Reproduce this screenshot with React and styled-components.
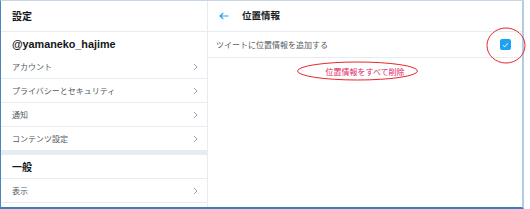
import React from "react";
import styled, { createGlobalStyle } from "styled-components";

const Global = createGlobalStyle`
  html, body { margin: 0; padding: 0; background: #ffffff; }
  body { font-family: "Noto Sans CJK JP", "Liberation Sans", sans-serif; }
`;

const Frame = styled.div`
  position: relative;
  width: 524px;
  height: 209px;
  box-sizing: border-box;
  border-left: 1px solid #4f82c0;
  border-top: 1px solid #c9d6e6;
  border-right: 2px solid #b4cbe8;
  border-bottom: 2px solid #3f7bbf;
  display: flex;
  overflow: visible;
  background: #fff;
`;

const LeftPanel = styled.div`
  width: 206px;
  border-right: 1px solid #e6ecf0;
  display: flex;
  flex-direction: column;
`;

const RightPanel = styled.div`
  flex: 1;
  display: flex;
  flex-direction: column;
`;

const Header = styled.div`
  height: 30px;
  border-bottom: 1px solid #e6ecf0;
  display: flex;
  align-items: center;
  padding-left: ${(p) => p.$pad || 11}px;
  gap: 13px;
  box-sizing: content-box;
`;

const HeaderTitle = styled.div`
  font-size: ${(p) => p.$size || 10}px;
  font-weight: 700;
  color: #14171a;
  line-height: 1;
`;

const UserName = styled.div`
  height: 23px;
  display: flex;
  align-items: center;
  padding-left: 11px;
  font-family: "Liberation Sans", Arial, sans-serif;
  font-size: 10.8px;
  font-weight: 700;
  color: #14171a;
`;

const Row = styled.div`
  height: 23px;
  border-bottom: ${(p) => (p.$last ? "none" : "1px solid #e6ecf0")};
  display: flex;
  align-items: center;
  justify-content: space-between;
  padding: 0 9px 0 11px;
  box-sizing: content-box;
`;

const RowLabel = styled.span`
  font-size: 8px;
  color: #555c63;
  line-height: 1;
`;

const SectionTitle = styled.div`
  height: 23px;
  border-bottom: 1px solid #e6ecf0;
  display: flex;
  align-items: center;
  padding-left: 11px;
  font-size: 10px;
  font-weight: 700;
  color: #14171a;
  box-sizing: content-box;
`;

const Band = styled.div`
  height: 5px;
  background: #e6ecf0;
`;

const SettingRow = styled.div`
  height: 25px;
  border-bottom: 1px solid #e6ecf0;
  display: flex;
  align-items: center;
  justify-content: space-between;
  padding: 0 11px 0 8px;
  box-sizing: content-box;
`;

const Checkbox = styled.div`
  width: 11px;
  height: 11px;
  border-radius: 2px;
  background: #1da1f2;
  display: flex;
  align-items: center;
  justify-content: center;
`;

const DeleteLink = styled.div`
  height: 26px;
  display: flex;
  align-items: center;
  justify-content: center;
  font-size: 8px;
  color: #e0245e;
`;

const Overlay = styled.svg`
  position: absolute;
  left: -1px;
  top: -1px;
  pointer-events: none;
  overflow: visible;
`;

const Chevron = () => (
  <svg width="5" height="8" viewBox="0 0 5 8">
    <polyline points="1,1 4,4 1,7" fill="none" stroke="#8899a6" strokeWidth="0.9" />
  </svg>
);

const BackArrow = () => (
  <svg width="10" height="8" viewBox="0 0 10 8">
    <path d="M9.5 4H1.2M4.2 1L1 4l3.2 3" fill="none" stroke="#1da1f2" strokeWidth="1.1" />
  </svg>
);

const Check = () => (
  <svg width="7" height="6" viewBox="0 0 7 6">
    <polyline points="1,3.2 2.7,4.8 6,1.2" fill="none" stroke="#fff" strokeWidth="1" />
  </svg>
);

const menu = ["アカウント", "プライバシーとセキュリティ", "通知"];

export default function App() {
  return (
    <>
      <Global />
      <Frame>
        <LeftPanel>
          <Header>
            <HeaderTitle>設定</HeaderTitle>
          </Header>
          <UserName>@yamaneko_hajime</UserName>
          {menu.map((m) => (
            <Row key={m}>
              <RowLabel>{m}</RowLabel>
              <Chevron />
            </Row>
          ))}
          <Row $last>
            <RowLabel>コンテンツ設定</RowLabel>
            <Chevron />
          </Row>
          <Band />
          <SectionTitle>一般</SectionTitle>
          <Row>
            <RowLabel>表示</RowLabel>
            <Chevron />
          </Row>
        </LeftPanel>
        <RightPanel>
          <Header $pad={11}>
            <BackArrow />
            <HeaderTitle $size={9.5}>位置情報</HeaderTitle>
          </Header>
          <SettingRow>
            <RowLabel>ツイートに位置情報を追加する</RowLabel>
            <Checkbox>
              <Check />
            </Checkbox>
          </SettingRow>
          <DeleteLink>位置情報をすべて削除</DeleteLink>
        </RightPanel>
        <Overlay width="530" height="209" viewBox="0 0 530 209">
          <ellipse cx="357.5" cy="71" rx="60" ry="9" fill="none" stroke="#e8262b" strokeWidth="1" />
          <ellipse cx="506" cy="45.5" rx="19" ry="17.5" fill="none" stroke="#e8262b" strokeWidth="1" />
        </Overlay>
      </Frame>
    </>
  );
}
